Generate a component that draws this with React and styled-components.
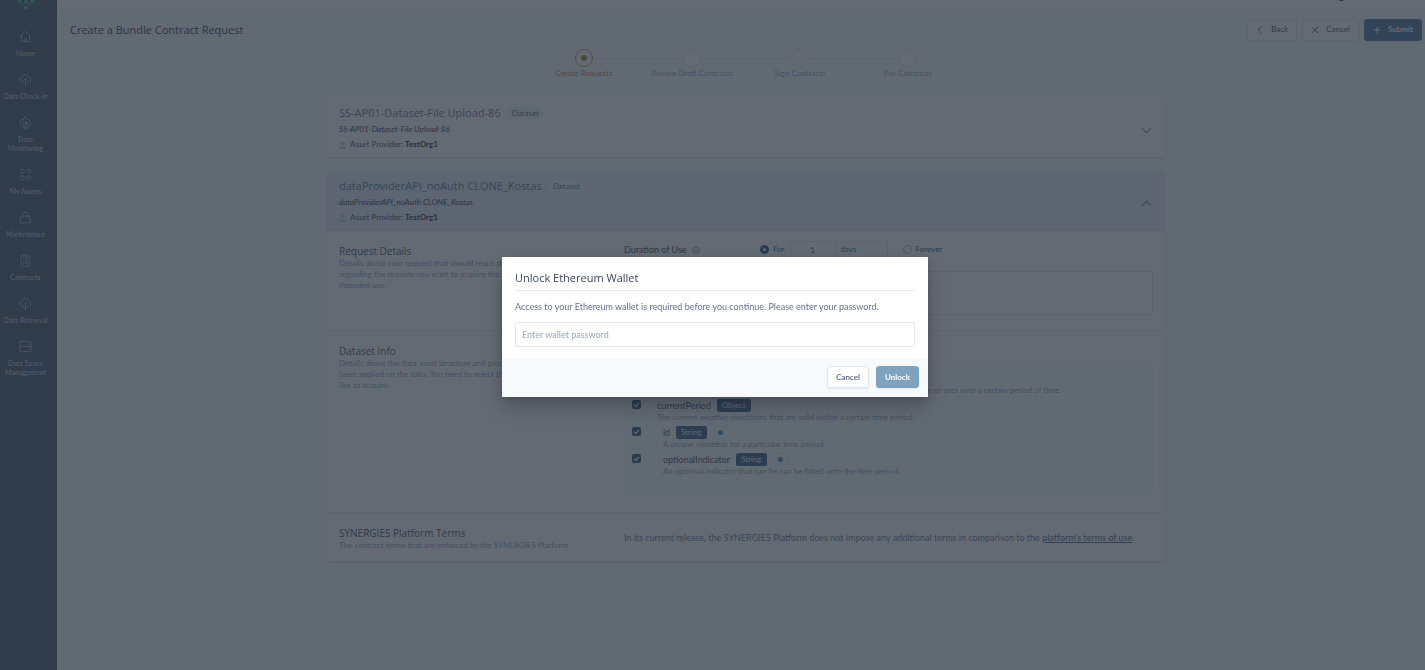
import React, { useState } from 'react'
import styled, { createGlobalStyle } from 'styled-components';

const GlobalStyle = createGlobalStyle`
    * {
        box-sizing: border-box;
    }
    body {
        margin: 0;
        background: #f7fafc;
        color: #2d3748;
        font-family: Lato, "Open Sans", sans-serif;
        font-size: 9px;
        line-height: 11px;
    }
    button, input, select, textarea {
        font: inherit;
        color: inherit;
    }
    h1, h2, h3, p {
        margin: 0;
    }
    h1, h2, h3 {
        font-family: "Open Sans", "Noto Sans", sans-serif;
        font-weight: 500;
    }
    h1, h2 {
        font-size: 11px;
        line-height: 16px;
    }
`

const Page = styled.div`
    display: flex;
    min-height: 100vh;
`

/* ---------- sidebar ---------- */

const Sidebar = styled.nav`
    flex: none;
    width: 57px;
    padding-right: 6px;
    background: #384759;
    display: flex;
    flex-direction: column;
    align-items: center;
`

const Logo = styled.svg`
    width: 18px;
    height: 10px;
    margin-bottom: 20px;
    fill: #3fae98;
`

const NavList = styled.ul`
    list-style: none;
    margin: 0;
    padding: 0;
    display: flex;
    flex-direction: column;
    gap: 15px;
`

const NavLink = styled.a`
    display: flex;
    flex-direction: column;
    align-items: center;
    gap: 6px;
    color: #a3b1c4;
    font-size: 7px;
    font-weight: 700;
    line-height: 9px;
    text-align: center;
    text-decoration: none;
`

const Icon = styled.svg`
    flex: none;
    width: ${props => props.$size || 13}px;
    height: ${props => props.$size || 13}px;
    fill: none;
    stroke: currentColor;
    stroke-width: ${props => props.$stroke || 1.6};
    stroke-linecap: round;
    stroke-linejoin: round;
`

/* ---------- header ---------- */

const Main = styled.main`
    flex: 1;
    min-width: 0;
`

const TopBar = styled.div`
    height: 10px;
    padding-right: 81px;
    background: #ffffff;
    border-bottom: 1px solid #e2e8f0;
    display: flex;
    justify-content: flex-end;
    align-items: flex-start;
`

const HeaderRow = styled.header`
    display: flex;
    justify-content: space-between;
    align-items: center;
    height: 39px;
    padding: 0 3px 0 13px;
`

const PageTitle = styled.h1`
    color: #1a2436;
`

const Actions = styled.div`
    display: flex;
    gap: 5px;
`

const Button = styled.button`
    display: inline-flex;
    align-items: center;
    justify-content: center;
    gap: 7px;
    height: 22px;
    padding: 0 8px;
    border: 1px solid ${props => (props.$primary ? props.$tone || '#3f688a' : '#e2e8f0')};
    border-radius: 3px;
    background: ${props => (props.$primary ? props.$tone || '#3f688a' : '#ffffff')};
    color: ${props => (props.$primary ? '#ffffff' : '#4a5568')};
    font-size: 8px;
    font-weight: ${props => (props.$primary ? 700 : 500)};
    box-shadow: 0 1px 2px rgba(0, 0, 0, 0.08);
    cursor: pointer;
`

/* ---------- stepper ---------- */

const Steps = styled.ol`
    list-style: none;
    margin: 0;
    padding: 0 3px 0 13px;
    height: 39px;
    display: flex;
    justify-content: center;
    border-bottom: 1px solid #edf2f7;
`

const Step = styled.li`
    width: 108px;
    display: flex;
    flex-direction: column;
    align-items: center;
    font-size: 8px;
    color: ${props => (props.$active ? '#b5803a' : '#8b9cb8')};
`

const StepMark = styled.div`
    width: 100%;
    padding-bottom: 1px;
    display: grid;
    grid-template-columns: 1fr 18px 1fr;
    align-items: center;
`

const Line = styled.span`
    height: 1px;
    background: ${props => (props.$hidden ? 'transparent' : '#e2e8f0')};
`

const Circle = styled.span`
    width: 18px;
    height: 18px;
    border: 1px solid ${props => (props.$active ? '#c8922e' : '#dbe2f0')};
    border-radius: 50%;
    background: #ffffff;
    display: grid;
    place-items: center;
    &::after {
        content: '';
        width: 6px;
        height: 6px;
        border-radius: 50%;
        background: ${props => (props.$active ? '#a87424' : 'transparent')};
    }
`

/* ---------- asset cards ---------- */

const Cards = styled.div`
    padding: 11px 3px 20px 13px;
    display: flex;
    flex-direction: column;
    align-items: center;
    gap: 15px;
`

const Card = styled.article`
    width: 100%;
    max-width: 838px;
    border-radius: 3px;
    background: #ffffff;
    box-shadow: 0 1px 2px rgba(0, 0, 0, 0.16);
    overflow: hidden;
`

const CardHead = styled.div`
    display: flex;
    justify-content: space-between;
    align-items: center;
    padding: 6px 12px;
    background: ${props => (props.$open ? '#e6ebf5' : 'transparent')};
    border-bottom: ${props => (props.$open ? '1px solid #dde3ee' : '0')};
    font-size: 8px;
`

const TitleLine = styled.div`
    display: flex;
    align-items: center;
    gap: 6px;
`

const AssetTitle = styled.h2`
    color: #4f6a8c;
`

const Badge = styled.span`
    padding: 0 5px;
    border-radius: 6px;
    background: #e9f5f1;
    color: #3f6b62;
    line-height: 12px;
`

const Subtitle = styled.p`
    font-style: italic;
    line-height: 17px;
    color: #1a202c;
`

const Provider = styled.p`
    display: flex;
    align-items: center;
    gap: 4px;
    line-height: 13px;
    color: #2d3748;
    svg {
        fill: #b6c2d2;
    }
    strong {
        font-weight: 700;
        color: #10151f;
    }
`

const Toggle = styled.button`
    padding: 5px 1px 0;
    border: 0;
    background: none;
    color: #64768e;
    display: flex;
    cursor: pointer;
`

const Section = styled.section`
    display: grid;
    grid-template-columns: 35fr 65fr;
    padding: 10px 12px ${props => props.$bottom || 10}px;
    &:not(:last-child) {
        border-bottom: 1px solid #e6ebf2;
    }
`

const Intro = styled.div`
    padding-top: 3px;
`

const SectionTitle = styled.h3`
    font-size: 10px;
    line-height: 14px;
    color: #303c50;
`

const Hint = styled.p`
    font-size: 8px;
    color: #8593a9;
`

const Duration = styled.div`
    display: grid;
    grid-template-columns: 136px 1fr;
    align-items: center;
    height: 16px;
    color: #2d3748;
`

const Label = styled.span`
    display: flex;
    align-items: center;
    gap: 5px;
`

const Choices = styled.div`
    display: flex;
    align-items: center;
    gap: 15px;
    font-size: 8px;
    label {
        display: flex;
        align-items: center;
        gap: 4px;
    }
`

const Radio = styled.input.attrs({ type: 'radio' })`
    appearance: none;
    width: 9px;
    height: 9px;
    margin: 0;
    border: ${props => (props.checked ? '3px solid #1f4a75' : '1px solid #a0aec0')};
    border-radius: 50%;
    background: #ffffff;
`

const Period = styled.div`
    display: flex;
    align-items: center;
    gap: 5px;
`

const Fields = styled.div`
    display: flex;
    height: 17px;
    input, select {
        appearance: none;
        height: 17px;
        padding: 0 5px;
        border: 1px solid #dde4ed;
        border-radius: 0;
        background: #ffffff;
    }
    input {
        width: 46px;
        text-align: center;
    }
    select {
        width: 52px;
        border-left: 0;
    }
`

const Reason = styled.textarea`
    display: block;
    width: 100%;
    height: 44px;
    margin-top: 14px;
    border: 1px solid #dde4ed;
    border-radius: 2px;
    background: #ffffff;
    resize: none;
`

const Tree = styled.ul`
    list-style: none;
    margin: 22px 0 5px;
    padding: 7px 7px 17px;
    border: 1px solid #edf1f6;
    border-radius: 4px;
    background: #f7fafc;
`

const TreeRow = styled.li`
    height: 27px;
    display: grid;
    grid-template-columns: 10px 1fr;
    column-gap: ${props => props.$indent}px;
    align-items: start;
`

const Check = styled.input.attrs({ type: 'checkbox' })`
    appearance: none;
    width: 9px;
    height: 9px;
    margin: 2px 0 0;
    border-radius: 2px;
    background: #1f4468 url("data:image/svg+xml,%3Csvg xmlns='http://www.w3.org/2000/svg' viewBox='0 0 9 9'%3E%3Cpath d='M2 4.6l1.8 1.7L7 2.9' fill='none' stroke='white' stroke-width='1.2'/%3E%3C/svg%3E") center / 9px no-repeat;
`

const FieldName = styled.label`
    display: flex;
    align-items: center;
    gap: 6px;
    height: 14px;
    color: #2d3748;
`

const Type = styled.span`
    padding: 0 5px;
    border-radius: 2px;
    background: #2c5278;
    color: #dfe8f2;
    font-size: 8px;
    line-height: 13px;
`

const Dot = styled.span`
    width: 16px;
    height: 13px;
    border: 1px solid #e6ebf2;
    border-radius: 3px;
    display: grid;
    place-items: center;
    &::after {
        content: '';
        width: 5px;
        height: 5px;
        border-radius: 50%;
        background: #2f7fc8;
    }
`

const Terms = styled.p`
    padding-top: 9px;
    color: #5a6b85;
    a {
        color: #3c4f73;
    }
`

/* ---------- modal ---------- */

const Overlay = styled.div`
    position: fixed;
    inset: 0;
    display: flex;
    align-items: center;
    justify-content: center;
    padding: 0 0 16px 5px;
    background: rgba(47, 56, 70, 0.75);
`

const Modal = styled.form`
    width: 30%;
    min-width: 426px;
    background: #ffffff;
    box-shadow: 0 10px 20px rgba(0, 0, 0, 0.2), 0 3px 6px rgba(0, 0, 0, 0.12);
`

const ModalBody = styled.div`
    padding: 13px 13px 12px;
`

const ModalTitle = styled.h2`
    padding-bottom: 4px;
    border-bottom: 1px solid #e6ebf2;
    color: #3a475c;
`

const ModalText = styled.label`
    display: block;
    padding: 9px 0 8px;
    line-height: 14px;
    color: #66718a;
`

const Password = styled.input`
    display: block;
    width: 100%;
    height: 25px;
    padding: 0 6px;
    border: 1px solid #e2e8f0;
    border-radius: 2px;
    outline: none;
    &::placeholder {
        color: #94a9b8;
        opacity: 1;
    }
`

const ModalFoot = styled.div`
    display: flex;
    justify-content: flex-end;
    gap: 7px;
    padding: 7px 9px 9px;
    background: #f7fafc;
`

const icons = {
    home: <path d="M2 11.5L12 2.5l10 9M4.5 9.5V21.5h15V9.5M10 21.5v-5.5h4v5.5" />,
    upload: <path d="M8 17H6.5a5 5 0 0 1-.6-9.9A6.3 6.3 0 0 1 18 7.2 5 5 0 0 1 17.5 17H16M12 23V10.5M8.5 13.5l3.5-3.5 3.5 3.5" />,
    flame: (
        <>
            <path d="M12 22.5a9.5 9.5 0 0 1-9.5-9.5c0-3.5 1.8-6 4-7.5 0 1.8.5 2.8 1.5 3.3.2-3 1.5-5.5 4.5-7.3 0 2.5 1.5 3.5 4.5 5 3 1.5 4.5 3.8 4.5 6.5a9.500 9.500 0 0 1-9.500 9.500z" />
            <path d="M12 10.5c2.5 0 4.2 1.5 4.2 3.7a4.2 4.2 0 0 1-8.4 0c0-1 .4-1.9 1-2.6M12 10.5v4M12 14.5h2" />
        </>
    ),
    grid: (
        <>
            <rect x="2.5" y="2.5" width="7" height="7" rx="2.5" />
            <rect x="14.5" y="2.5" width="7" height="7" rx="2.5" />
            <rect x="2.5" y="14.5" width="7" height="7" rx="2.5" />
            <rect x="14.5" y="14.5" width="7" height="7" rx="2.5" />
        </>
    ),
    bag: <path d="M4 9.5h16l1.5 12.5h-19zM7.5 12V6.5a4.5 4.5 0 0 1 9 0V12" />,
    clipboard: (
        <>
            <path d="M8.5 3.5H4v19h16v-19h-4.5" />
            <path d="M8.5 5.5v-3h2a1.5 1.5 0 0 1 3 0h2v3zM8 11h1M12 11h4M8 14.5h1M12 14.5h4M8 18h1M12 18h4" />
        </>
    ),
    download: <path d="M8 17H6.5a5 5 0 0 1-.6-9.9A6.3 6.3 0 0 1 18 7.2 5 5 0 0 1 17.5 17H16M12 10v13M8.5 19.5l3.5 3.5 3.5-3.5" />,
    server: (
        <>
            <rect x="2" y="2.5" width="20" height="19" rx="2" />
            <path d="M2 12h20M18 7.5h.5M18 16.5h.5" />
        </>
    ),
    back: <path d="M16 3l-9 9 9 9" />,
    close: <path d="M3 3l18 18M21 3L3 21" />,
    plus: <path d="M12 3v18M3 12h18" />,
    down: <path d="M3 8l9 9 9-9" />,
    up: <path d="M3 16l9-9 9 9" />,
    info: <path d="M12 2a10 10 0 1 0 0 20 10 10 0 0 0 0-20M12 11v6M12 7v.5" />
}

const Glyph = ({ name, size, stroke }) => (
    <Icon viewBox="0 0 24 24" $size={size} $stroke={stroke} aria-hidden="true">{icons[name]}</Icon>
)

const navItems = [
    { icon: 'home', lines: ['Home'] },
    { icon: 'upload', lines: ['Data Check-in'] },
    { icon: 'flame', lines: ['Data', 'Monitoring'] },
    { icon: 'grid', lines: ['My Assets'] },
    { icon: 'bag', lines: ['Marketplace'] },
    { icon: 'clipboard', lines: ['Contracts'] },
    { icon: 'download', lines: ['Data Retrieval'] },
    { icon: 'server', lines: ['Data Space', 'Management'] }
]

const steps = ['Create Requests', 'Review Draft Contracts', 'Sign Contracts', 'Pay Contracts']

const fields = [
    { name: 'weather', type: 'Object', text: 'The weather conditions that are observed or likely to occur for a given location or area over a certain period of time.', indent: 15 },
    { name: 'currentPeriod', type: 'Object', text: 'The current weather conditions that are valid within a certain time period.', indent: 15 },
    { name: 'id', type: 'String', dot: true, text: 'A unique identifier for a particular time period.', indent: 21 },
    { name: 'optionalIndicator', type: 'String', dot: true, text: 'An optional indicator that can be can be fitted onto the time period.', indent: 21 }
]

const Lines = ({ items }) => items.map((line, i) => (
    <React.Fragment key={line}>{i > 0 && <br />}{line}</React.Fragment>
))

const AssetHead = ({ title, open, onToggle }) => (
    <CardHead $open={open}>
        <div>
            <TitleLine>
                <AssetTitle>{title}</AssetTitle>
                <Badge>Dataset</Badge>
            </TitleLine>
            <Subtitle>{title}</Subtitle>
            <Provider>
                <svg width="7" height="8" viewBox="0 0 7 8" aria-hidden="true">
                    <circle cx="3.5" cy="2.5" r="2" />
                    <path d="M0 8V6.5Q0 5.5 1.5 5.5h4Q7 5.5 7 6.5V8z" />
                </svg>
                <span>Asset Provider: <strong>TestOrg1</strong></span>
            </Provider>
        </div>
        <Toggle type="button" aria-label={`Toggle ${title}`} onClick={onToggle}>
            <Glyph name={open ? 'up' : 'down'} size={11} stroke={2.5} />
        </Toggle>
    </CardHead>
)

const RequestForm = () => {
    const [limited, setLimited] = useState(true)

    return (
        <>
            <Section $bottom={15}>
                <Intro>
                    <SectionTitle>Request Details</SectionTitle>
                    <Hint>
                        <Lines items={['Details about your request that should reach the provider', 'regarding the reasons you want to acquire the asset and the', 'intended use.']} />
                    </Hint>
                </Intro>
                <div>
                    <Duration>
                        <Label>Duration of Use <Glyph name="info" size={8} /></Label>
                        <Choices>
                            <Period>
                                <label>
                                    <Radio name="duration" checked={limited} onChange={() => setLimited(true)} />
                                    For
                                </label>
                                <Fields>
                                    <input aria-label="Amount" defaultValue="1" />
                                    <select aria-label="Unit" defaultValue="days">
                                        <option>days</option>
                                        <option>months</option>
                                    </select>
                                </Fields>
                            </Period>
                            <label>
                                <Radio name="duration" checked={!limited} onChange={() => setLimited(false)} />
                                Forever
                            </label>
                        </Choices>
                    </Duration>
                    <Reason aria-label="Reason of the request" />
                </div>
            </Section>
            <Section>
                <Intro>
                    <SectionTitle>Dataset Info</SectionTitle>
                    <Hint>
                        <Lines items={['Details about the data asset structure and processing that has', 'been applied on the data. You need to select the fields you would', 'like to acquire.']} />
                    </Hint>
                </Intro>
                <Tree>
                    {fields.map(field => (
                        <TreeRow key={field.name} $indent={field.indent}>
                            <Check id={field.name} defaultChecked />
                            <div>
                                <FieldName htmlFor={field.name}>
                                    {field.name}
                                    <Type>{field.type}</Type>
                                    {field.dot && <Dot />}
                                </FieldName>
                                <Hint>{field.text}</Hint>
                            </div>
                        </TreeRow>
                    ))}
                </Tree>
            </Section>
            <Section>
                <Intro>
                    <SectionTitle>SYNERGIES Platform Terms</SectionTitle>
                    <Hint>The contract terms that are enforced by the SYNERGIES Plarform</Hint>
                </Intro>
                <Terms>
                    In its current release, the SYNERGIES Platform does not impose any additional terms in comparison to the <a href="#terms">platform's terms of use</a>.
                </Terms>
            </Section>
        </>
    )
}

const UnlockModal = ({ onClose }) => {
    const handleSubmit = (e) => {
        e.preventDefault()
        onClose()
    }

    return (
        <Overlay>
            <Modal role="dialog" aria-labelledby="unlock-title" onSubmit={handleSubmit}>
                <ModalBody>
                    <ModalTitle id="unlock-title">Unlock Ethereum Wallet</ModalTitle>
                    <ModalText htmlFor="wallet-password">
                        Access to your Ethereum wallet is required before you continue. Please enter your password.
                    </ModalText>
                    <Password id="wallet-password" type="password" placeholder="Enter wallet password" />
                </ModalBody>
                <ModalFoot>
                    <Button type="button" onClick={onClose}>Cancel</Button>
                    <Button type="submit" $primary $tone="#7fa3bf">Unlock</Button>
                </ModalFoot>
            </Modal>
        </Overlay>
    )
}

const App = () => {
    const [modalOpen, setModalOpen] = useState(true)
    const [openCard, setOpenCard] = useState(1)

    return (
        <>
            <GlobalStyle />
            <Page>
                <Sidebar>
                    <Logo viewBox="0 0 18 10" aria-hidden="true">
                        <circle cx="2.5" cy="1.5" r="2" />
                        <circle cx="9" cy="1.5" r="2" />
                        <circle cx="15.5" cy="1.5" r="2" />
                        <circle cx="5.5" cy="4.5" r="1" />
                        <circle cx="12.5" cy="4.5" r="1" />
                        <circle cx="9" cy="7.5" r="2" />
                    </Logo>
                    <NavList>
                        {navItems.map(item => (
                            <li key={item.icon}>
                                <NavLink href={`#${item.icon}`}>
                                    <Glyph name={item.icon} />
                                    <span><Lines items={item.lines} /></span>
                                </NavLink>
                            </li>
                        ))}
                    </NavList>
                </Sidebar>
                <Main>
                    <TopBar>
                        <svg width="5" height="1" viewBox="0 0 5 1" aria-hidden="true">
                            <path d="M0 0h5L4 1H1z" fill="#2b3a1c" />
                        </svg>
                    </TopBar>
                    <HeaderRow>
                        <PageTitle>Create a Bundle Contract Request</PageTitle>
                        <Actions>
                            <Button type="button"><Glyph name="back" size={8} stroke={3} />Back</Button>
                            <Button type="button"><Glyph name="close" size={8} stroke={3} />Cancel</Button>
                            <Button type="button" $primary onClick={() => setModalOpen(true)}>
                                <Glyph name="plus" size={8} stroke={3} />Submit
                            </Button>
                        </Actions>
                    </HeaderRow>
                    <Steps>
                        {steps.map((step, i) => (
                            <Step key={step} $active={i === 0}>
                                <StepMark>
                                    <Line $hidden={i === 0} />
                                    <Circle $active={i === 0} />
                                    <Line $hidden={i === steps.length - 1} />
                                </StepMark>
                                {step}
                            </Step>
                        ))}
                    </Steps>
                    <Cards>
                        {['SS-AP01-Dataset-File Upload-86', 'dataProviderAPI_noAuth CLONE_Kostas'].map((title, i) => (
                            <Card key={title}>
                                <AssetHead
                                    title={title}
                                    open={openCard === i}
                                    onToggle={() => setOpenCard(openCard === i ? null : i)}
                                />
                                {openCard === i && <RequestForm />}
                            </Card>
                        ))}
                    </Cards>
                </Main>
            </Page>
            {modalOpen && <UnlockModal onClose={() => setModalOpen(false)} />}
        </>
    )
}

export default App;
